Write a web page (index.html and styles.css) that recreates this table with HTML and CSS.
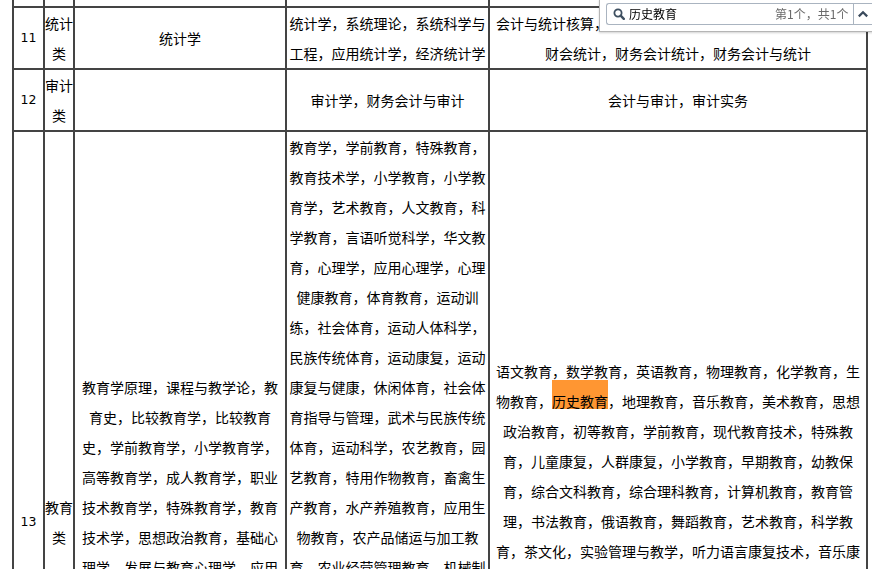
FILE: index.html
```html
<!DOCTYPE html>
<html lang="zh">
<head>
<meta charset="utf-8">
<title>专业目录</title>
<link rel="stylesheet" href="styles.css">
</head>
<body>
<table class="grid">
  <tr class="r10">
    <td class="c1"></td>
    <td class="c2"></td>
    <td class="c3"></td>
    <td class="c4"></td>
    <td class="c5"></td>
  </tr>
  <tr>
    <td class="c1 num">11</td>
    <td class="c2">统计类</td>
    <td class="c3">统计学</td>
    <td class="c4">统计学，系统理论，系统科学与工程，应用统计学，经济统计学</td>
    <td class="c5">会计与统计核算，统计实务，会计统计，经济统计与分析，财会统计，财务会计统计，财务会计与统计</td>
  </tr>
  <tr>
    <td class="c1 num">12</td>
    <td class="c2">审计类</td>
    <td class="c3"></td>
    <td class="c4">审计学，财务会计与审计</td>
    <td class="c5">会计与审计，审计实务</td>
  </tr>
  <tr class="r13">
    <td class="c1 num">13</td>
    <td class="c2">教育类</td>
    <td class="c3">教育学原理，课程与教学论，教育史，比较教育学，比较教育史，学前教育学，小学教育学，高等教育学，成人教育学，职业技术教育学，特殊教育学，教育技术学，思想政治教育，基础心理学，发展与教育心理学，应用心理学，体育人文社会学，运动人体科学，体育教育训练学，民族传统体育学，教育学</td>
    <td class="c4 top">教育学，学前教育，特殊教育，教育技术学，小学教育，小学教育学，艺术教育，人文教育，科学教育，言语听觉科学，华文教育，心理学，应用心理学，心理健康教育，体育教育，运动训练，社会体育，运动人体科学，民族传统体育，运动康复，运动康复与健康，休闲体育，社会体育指导与管理，武术与民族传统体育，运动科学，农艺教育，园艺教育，特用作物教育，畜禽生产教育，水产养殖教育，应用生物教育，农产品储运与加工教育，农业经营管理教育，机械制造工艺教育，机械维修及检测技术教育，机电技术教育，电气技术教育，汽车维修工程教育，应用电子技术教育，制浆造纸工艺教育，印刷工艺教育，食品工艺教育，纺织工艺教育，化工工艺教育，建筑工程教育</td>
    <td class="c5 mid">语文教育，数学教育，英语教育，物理教育，化学教育，生物教育，<span class="hit">历史教育</span>，地理教育，音乐教育，美术教育，思想政治教育，初等教育，学前教育，现代教育技术，特殊教育，儿童康复，人群康复，小学教育，早期教育，幼教保育，综合文科教育，综合理科教育，计算机教育，教育管理，书法教育，俄语教育，舞蹈教育，艺术教育，科学教育，茶文化，实验管理与教学，听力语言康复技术，音乐康复，体育教育，运动训练，社会体育，运动人体科学，民族传统体育，休闲体育，武术，心理咨询，心理健康教育，语言康复，教育技术，教育管理，体育保健，竞技体育，体育服务与管理</td>
  </tr>
</table>

<div class="findbar">
  <div class="findbox">
    <svg class="glass" width="12" height="12" viewBox="0 0 12 12">
      <circle cx="5" cy="5" r="3.6" fill="none" stroke="#3e4f60" stroke-width="1.8"/>
      <line x1="7.7" y1="7.7" x2="10.8" y2="10.8" stroke="#3e4f60" stroke-width="2.4" stroke-linecap="round"/>
    </svg>
    <span class="query">历史教育</span>
    <span class="count">第1个，共1个</span>
  </div>
  <div class="findbtn">
    <svg width="12" height="10" viewBox="0 0 12 10">
      <path d="M1.8 7.4 L6 3.2 L10.2 7.4" fill="none" stroke="#3a4a5c" stroke-width="2.2"/>
    </svg>
  </div>
</div>
</body>
</html>
```
FILE: styles.css
```css
html, body {
  margin: 0;
  padding: 0;
  background: #fff;
  overflow: hidden;
}

body {
  font-family: "Noto Sans CJK SC", "Noto Sans", sans-serif;
  font-size: 14px;
  color: #000;
}

.grid {
  margin: -34px 0 0 12px;
  width: 856px;
  table-layout: fixed;
  border-collapse: separate;
  border-spacing: 0;
  border: 1px solid #444;
}

.grid td {
  box-sizing: border-box;
  border: 1px solid #444;
  padding: 0 1px;
  line-height: 30px;
  text-align: center;
  vertical-align: middle;
  word-break: normal;
}

.grid td.c1 { width: 31px; padding: 0; }
.grid td.c2 { width: 30px; padding: 0; }
.grid td.c3 { width: 212px; }
.grid td.c4 { width: 203px; }
.grid td.c5 { width: 378px; }

.grid td.top { vertical-align: top; }
.grid td.mid { padding-bottom: 3px; }

.r10 td { height: 40px; }
.r13 td { height: 782px; }

.num {
  font-family: "DejaVu Sans", Verdana, sans-serif;
  font-size: 12.5px;
}

.hit {
  padding: 11px 0 0;
  background: linear-gradient(to bottom, #ff9632 0, #ff9632 calc(100% - 2px), transparent calc(100% - 2px));
}

.findbar {
  position: fixed;
  top: -1px;
  left: 599px;
  right: -4px;
  height: 33px;
  box-sizing: border-box;
  background: #fff;
  border: 1px solid #b5b5b5;
  box-shadow: 0 1px 2px rgba(0, 0, 0, 0.18);
  display: flex;
  align-items: flex-start;
  padding: 3px 0 0 6px;
}

.findbox {
  box-sizing: border-box;
  width: 253px;
  height: 22px;
  border: 1px solid #aab4c0;
  border-right: none;
  border-radius: 3px 0 0 3px;
  display: flex;
  align-items: center;
  padding: 0 5px 0 6px;
  font-size: 12px;
  line-height: 20px;
}

.glass {
  flex: none;
  margin-right: 4px;
}

.query {
  color: #000;
  flex: 1;
}

.count {
  color: #6a6a6a;
}

.findbtn {
  box-sizing: border-box;
  width: 22px;
  height: 22px;
  border: 1px solid #aab4c0;
  display: flex;
  align-items: center;
  padding-left: 3px;
}
```
